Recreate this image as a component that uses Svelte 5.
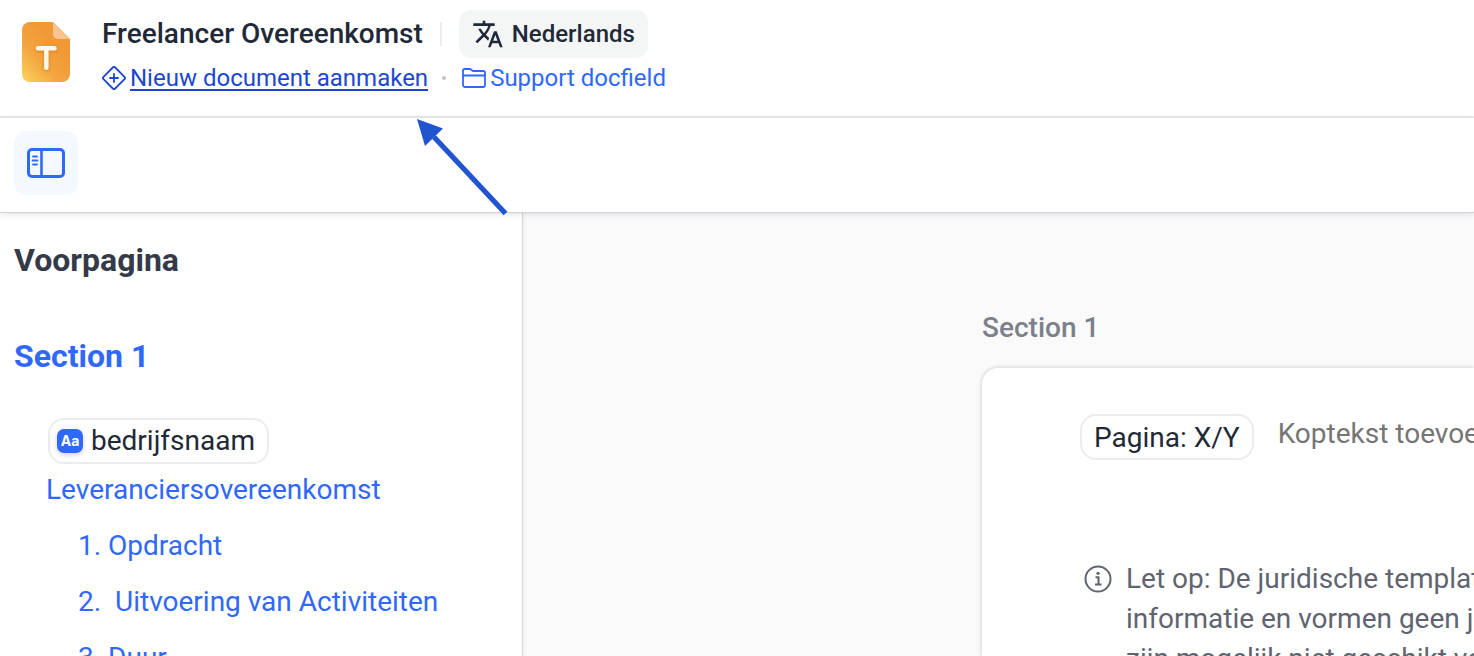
<script>
  let headerText = $state('');

  const chapters = [
    { number: '1.', title: 'Opdracht' },
    { number: '2.', title: 'Uitvoering van Activiteiten', indent: true },
    { number: '3.', title: 'Duur' }
  ];

  const notice = [
    'Let op: De juridische templates bevatten',
    'informatie en vormen geen juridisch advies',
    'zijn mogelijk niet geschikt voor'
  ];
</script>

<div class="app">
  <header>
    <svg class="logo" width="48" height="60" viewBox="0 0 48 60" aria-hidden="true">
      <defs>
        <linearGradient id="paper" x1="0" y1="1" x2="0.6" y2="0.3">
          <stop offset="0" stop-color="#fbd45c" />
          <stop offset="0.55" stop-color="#f3a541" />
          <stop offset="1" stop-color="#f09936" />
        </linearGradient>
        <linearGradient id="fold" x1="0" y1="1" x2="1" y2="0">
          <stop offset="0" stop-color="#f9c999" />
          <stop offset="1" stop-color="#f6b878" />
        </linearGradient>
        <filter id="soft" x="-50%" y="-50%" width="200%" height="200%">
          <feDropShadow dx="0" dy="1" stdDeviation="1.5" flood-color="#b05a00" flood-opacity="0.5" />
        </filter>
      </defs>
      <path d="M8 0h23l17 17v35a8 8 0 0 1-8 8H8a8 8 0 0 1-8-8V8a8 8 0 0 1 8-8z" fill="url(#paper)" />
      <path d="M31 0l17 17H36a5 5 0 0 1-5-5z" fill="url(#fold)" />
      <path d="M16 26.200h16.600M24.300 26.200v19.600" stroke="#fff8e6" stroke-width="4.400" stroke-linecap="round" filter="url(#soft)" />
    </svg>

    <div class="heading">
      <div class="title-row">
        <h1>Freelancer Overeenkomst</h1>
        <span class="divider"></span>
        <button class="language">
          <svg width="32" height="32" viewBox="0 0 24 24" fill="#1f2937" aria-hidden="true">
            <path d="M12.870 15.070l-2.540-2.510.030-.030A17.520 17.520 0 0 0 14.070 6H17V4h-7V2H8v2H1v2h11.170C11.500 7.920 10.440 9.750 9 11.350 8.070 10.320 7.300 9.190 6.690 8h-2c.730 1.630 1.730 3.170 2.980 4.560l-5.090 5.020L4 19l5-5 3.110 3.110.760-2.040zM18.500 10h-2L12 22h2l1.120-3h4.750L21 22h2l-4.500-12zm-2.620 7l1.620-4.330L19.120 17h-3.240z" />
          </svg>
          Nederlands
        </button>
      </div>
      <nav class="links">
        <a class="new" href="#new">
          <svg width="24" height="24" viewBox="0 0 24 24" fill="none" stroke="currentColor" stroke-width="1.800" stroke-linecap="round" stroke-linejoin="round" aria-hidden="true">
            <path d="M10.800 1.500L1.500 10.800a1.700 1.700 0 0 0 0 2.400l9.300 9.300a1.700 1.700 0 0 0 2.400 0l9.300-9.300a1.700 1.700 0 0 0 0-2.400l-9.300-9.300a1.700 1.700 0 0 0-2.400 0z" />
            <path d="M12 8v8M8 12h8" />
          </svg>
          <span>Nieuw document aanmaken</span>
        </a>
        <span class="dot"></span>
        <a class="folder" href="#folder">
          <svg width="24" height="20" viewBox="0 0 24 20" fill="none" stroke="currentColor" stroke-width="1.800" stroke-linejoin="round" aria-hidden="true">
            <path d="M1 17V2.500A1.500 1.500 0 0 1 2.500 1h5.300c.5 0 .9.200 1.200.500l1.200 1c.3.300.7.500 1.200.500h9.800A1.800 1.800 0 0 1 23 4.800V17a2 2 0 0 1-2 2H3a2 2 0 0 1-2-2zM1 7.500h22" />
          </svg>
          <span>Support docfield</span>
        </a>
      </nav>
    </div>
  </header>

  <div class="toolbar">
    <button class="toggle" aria-label="Inhoudsopgave">
      <svg width="38" height="30" viewBox="0 0 38 30" fill="none" stroke="#2f68fb" aria-hidden="true">
        <rect x="1.500" y="1.500" width="35" height="27" rx="3.500" stroke-width="3" />
        <path d="M14.500 2v26" stroke-width="2.600" />
        <path d="M6 8.500h4M5.500 12.500h5M6 16.500h4" stroke-width="1.800" stroke-linecap="round" />
      </svg>
    </button>
  </div>

  <div class="body">
    <aside>
      <h2>Voorpagina</h2>
      <h2 class="active">Section 1</h2>
      <div class="outline">
        <span class="field"><span class="badge">Aa</span>bedrijfsnaam</span>
        <a href="#contract">Leveranciersovereenkomst</a>
        <ol>
          {#each chapters as chapter}
            <li>
              <a href="#{chapter.title}">{chapter.number} {#if chapter.indent}&nbsp;{/if}{chapter.title}</a>
            </li>
          {/each}
        </ol>
      </div>
    </aside>

    <main>
      <h3>Section 1</h3>
      <section class="page">
        <div class="page-header">
          <span class="page-number">Pagina: X/Y</span>
          <input type="text" aria-label="Koptekst" placeholder="Koptekst toevoegen" bind:value={headerText} />
        </div>
        <div class="notice">
          <svg width="28" height="28" viewBox="0 0 28 28" fill="none" stroke="#5f6470" aria-hidden="true">
            <circle cx="14" cy="14" r="12.500" stroke-width="2" />
            <path d="M11.500 12.300h3v7M11 19.500h6.500" stroke-width="2" />
            <circle cx="14" cy="8.300" r="1.600" fill="#5f6470" stroke="none" />
          </svg>
          <p>
            {#each notice as line}
              <span>{line}</span>
            {/each}
          </p>
        </div>
      </section>
    </main>
  </div>

  <svg class="arrow" width="92" height="98" viewBox="0 0 92 98" aria-hidden="true">
    <path d="M18 19L89.500 95.500" stroke="#2155cf" stroke-width="5.200" />
    <path d="M1 1l26 9.500L9 28z" fill="#2155cf" />
  </svg>
</div>

<style>
  :global(body) {
    margin: 0;
  }

  .app {
    position: relative;
    display: flex;
    flex-direction: column;
    height: 100vh;
    overflow: hidden;
    background: #fff;
    color: #1f2937;
    font-family: Roboto, sans-serif;
    font-size: 28px;
  }

  h1, h2, h3, p, ol {
    margin: 0;
    padding: 0;
  }

  a {
    color: #2f68fb;
    text-decoration: none;
  }

  button {
    border: none;
    font-family: inherit;
    cursor: pointer;
  }

  svg {
    flex: none;
  }

  header {
    display: flex;
    gap: 32px;
    padding: 10px 22px 18px;
    border-bottom: 2px solid #ececec;
  }

  .logo {
    margin-top: 12px;
  }

  .title-row,
  .links,
  .links a {
    display: flex;
    align-items: center;
    white-space: nowrap;
  }

  .title-row {
    gap: 17px;
  }

  h1 {
    font-size: 28px;
    font-weight: 500;
    line-height: 48px;
  }

  .divider {
    width: 2px;
    height: 24px;
    background: #ececec;
  }

  .language {
    display: flex;
    align-items: center;
    gap: 8px;
    height: 48px;
    padding: 0 13px;
    border-radius: 12px;
    background: #f4f6f6;
    color: #1f2937;
    font-size: 24px;
    font-weight: 500;
  }

  .links {
    height: 40px;
    font-size: 24px;
    line-height: 32px;
  }

  .links a {
    gap: 4px;
  }

  .links .new {
    color: #1c47d0;
  }

  .new span {
    text-decoration: underline;
    text-decoration-thickness: 2px;
    text-underline-offset: 3px;
  }

  .dot {
    width: 4px;
    height: 4px;
    margin: 0 16px 0 14px;
    border-radius: 50%;
    background: #c0c3c8;
  }

  .toolbar {
    position: relative;
    z-index: 1;
    padding: 13px 14px 17px;
    border-bottom: 1px solid #d0d1d8;
    background: #fff;
    box-shadow: 0 1px 6px rgba(30, 30, 60, 0.14);
  }

  .toggle {
    display: flex;
    align-items: center;
    justify-content: center;
    width: 64px;
    height: 64px;
    padding: 0;
    border-radius: 12px;
    background: #f4f8ff;
  }

  .body {
    display: flex;
    flex: 1;
    min-height: 0;
  }

  aside {
    position: relative;
    flex: none;
    box-sizing: border-box;
    width: 523px;
    padding: 23px 14px 0;
    border-right: 1px solid #d6d7de;
    background: #fff;
    box-shadow: 0 0 4px rgba(30, 30, 60, 0.1);
    overflow: hidden;
  }

  h2 {
    margin-bottom: 48px;
    color: #343a48;
    font-size: 32px;
    font-weight: 700;
    line-height: 48px;
  }

  h2.active {
    margin-bottom: 38px;
    color: #2f68fb;
  }

  .outline {
    display: flex;
    flex-direction: column;
    align-items: flex-start;
    padding-left: 32px;
    line-height: 56px;
    white-space: nowrap;
  }

  .outline > a {
    line-height: 52px;
  }

  .field,
  .page-number {
    display: flex;
    align-items: center;
    box-sizing: border-box;
    height: 46px;
    border: 2px solid #ececec;
    border-radius: 16px;
    background: #fff;
    white-space: nowrap;
  }

  .field {
    gap: 8px;
    margin-left: 2px;
    padding: 0 12px 0 7px;
  }

  .badge {
    width: 26px;
    height: 24px;
    border-radius: 7px;
    background: #2f68fb;
    box-shadow: 0 2px 5px rgba(30, 30, 60, 0.2);
    color: #fff;
    font-family: Inter, sans-serif;
    font-size: 14px;
    font-weight: 700;
    line-height: 24px;
    text-align: center;
  }

  ol {
    padding: 2px 0 0 32px;
    list-style: none;
  }

  main {
    display: flex;
    flex: 1;
    flex-direction: column;
    min-width: 0;
    padding: 95px 0 0 459px;
    background: #fafafa;
    overflow: hidden;
  }

  h3 {
    margin-bottom: 20px;
    color: #7b808a;
    font-size: 28px;
    font-weight: 500;
    line-height: 40px;
  }

  .page {
    flex: 1;
    padding: 46px 0 0 98px;
    border-radius: 16px 0 0 0;
    background: #fff;
    box-shadow: 0 0 4px rgba(30, 30, 80, 0.25);
    overflow: hidden;
  }

  .page-header {
    display: flex;
    gap: 24px;
  }

  .page-number {
    padding: 0 12px;
  }

  input {
    flex: 1;
    min-width: 0;
    height: 38px;
    padding: 0;
    border: none;
    outline: none;
    background: none;
    color: #1f2937;
    font-family: inherit;
    font-size: 28px;
  }

  input::placeholder {
    color: #757575;
  }

  .notice {
    display: flex;
    gap: 14px;
    margin-top: 99px;
    padding-left: 4px;
    color: #5f6470;
    line-height: 40px;
  }

  .notice svg {
    margin-top: 6px;
  }

  .notice span {
    display: block;
    white-space: nowrap;
  }

  /* points at the "new document" link, over header and toolbar */
  .arrow {
    position: absolute;
    top: 118px;
    left: 416px;
    z-index: 2;
    pointer-events: none;
  }
</style>
